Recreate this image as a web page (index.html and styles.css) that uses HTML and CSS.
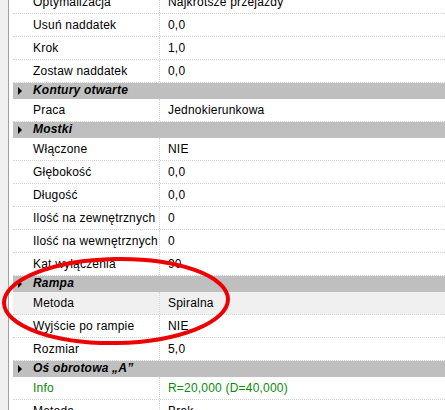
FILE: index.html
```html
<!DOCTYPE html>
<html lang="pl">
<head>
    <meta charset="UTF-8">
    <title>Właściwości</title>
    <link rel="stylesheet" href="styles.css">
</head>
<body>
    <div class="frame">
        <div class="gutter"></div>
        <div class="sheet">
            <div class="row first"><div class="name">Optymalizacja</div><div class="val">Najkrótsze przejazdy</div></div>
            <div class="row"><div class="name">Usuń naddatek</div><div class="val">0,0</div></div>
            <div class="row"><div class="name">Krok</div><div class="val">1,0</div></div>
            <div class="row"><div class="name">Zostaw naddatek</div><div class="val">0,0</div></div>

            <div class="cat"><span class="arrow"></span>Kontury otwarte</div>
            <div class="row"><div class="name">Praca</div><div class="val">Jednokierunkowa</div></div>

            <div class="cat"><span class="arrow"></span>Mostki</div>
            <div class="row"><div class="name">Włączone</div><div class="val">NIE</div></div>
            <div class="row"><div class="name">Głębokość</div><div class="val">0,0</div></div>
            <div class="row"><div class="name">Długość</div><div class="val">0,0</div></div>
            <div class="row"><div class="name">Ilość na zewnętrznych</div><div class="val">0</div></div>
            <div class="row"><div class="name">Ilość na wewnętrznych</div><div class="val">0</div></div>
            <div class="row"><div class="name">Kąt wyłączenia</div><div class="val">90</div></div>

            <div class="cat"><span class="arrow"></span>Rampa</div>
            <div class="row selected"><div class="name">Metoda</div><div class="val">Spiralna</div></div>
            <div class="row"><div class="name">Wyjście po rampie</div><div class="val">NIE</div></div>
            <div class="row"><div class="name">Rozmiar</div><div class="val">5,0</div></div>

            <div class="cat"><span class="arrow"></span>Oś obrotowa „A”</div>
            <div class="row info"><div class="name">Info</div><div class="val">R=20,000 (D=40,000)</div></div>
            <div class="row"><div class="name">Metoda</div><div class="val">Brak</div></div>
        </div>
    </div>

    <!-- red marker drawn over the Rampa section -->
    <svg class="marker" width="445" height="410" viewBox="0 0 445 410">
        <ellipse cx="116" cy="301" rx="112" ry="42" transform="rotate(-1 116 301)"
                 fill="none" stroke="#ee0000" stroke-width="4"/>
    </svg>
</body>
</html>
```

FILE: styles.css
```css
* { margin: 0; padding: 0; box-sizing: border-box; }
html, body { width: 445px; height: 410px; overflow: hidden; background: #fff; }
body {
    font-family: "Liberation Sans", Arial, sans-serif;
    font-size: 12px;
    letter-spacing: 0.2px;
    color: #000;
    position: relative;
}
.frame { display: flex; height: 410px; }
.gutter {
    width: 11px;
    background: #f0f0f0;
    border-right: 1px solid #a0a0a0;
    flex: none;
    position: relative;
}
.gutter::after {
    content: "";
    position: absolute;
    left: 8px; top: 0; bottom: 0;
    width: 1px;
    background: #a0a0a0;
}
.gutter::before {
    content: "";
    position: absolute;
    left: 9px; top: 0; bottom: 0;
    width: 2px;
    background: #fff;
}
.sheet { flex: 1; padding-left: 2px; }
.row {
    display: flex;
    height: 23px;
    line-height: 22px;
    border-bottom: 1px dotted #d4d4d4;
}
.row.first { margin-top: -9px; }
.row.selected { background: #f0f0f0; }
.row.info { color: #0a8a0a; }
.name {
    width: 147px;
    padding-left: 20px;
    border-right: 1px dotted #d4d4d4;
    white-space: nowrap;
    overflow: hidden;
}
.val { padding-left: 8px; white-space: nowrap; }
.cat {
    height: 16px;
    line-height: 15px;
    background: #bfbfbf;
    font-weight: bold;
    font-style: italic;
    padding-left: 20px;
    position: relative;
}
.arrow {
    position: absolute;
    left: 5px; top: 4px;
    width: 0; height: 0;
    border-top: 4px solid transparent;
    border-bottom: 4px solid transparent;
    border-left: 4px solid #000;
}
.marker { position: absolute; left: 0; top: 0; pointer-events: none; }
```
